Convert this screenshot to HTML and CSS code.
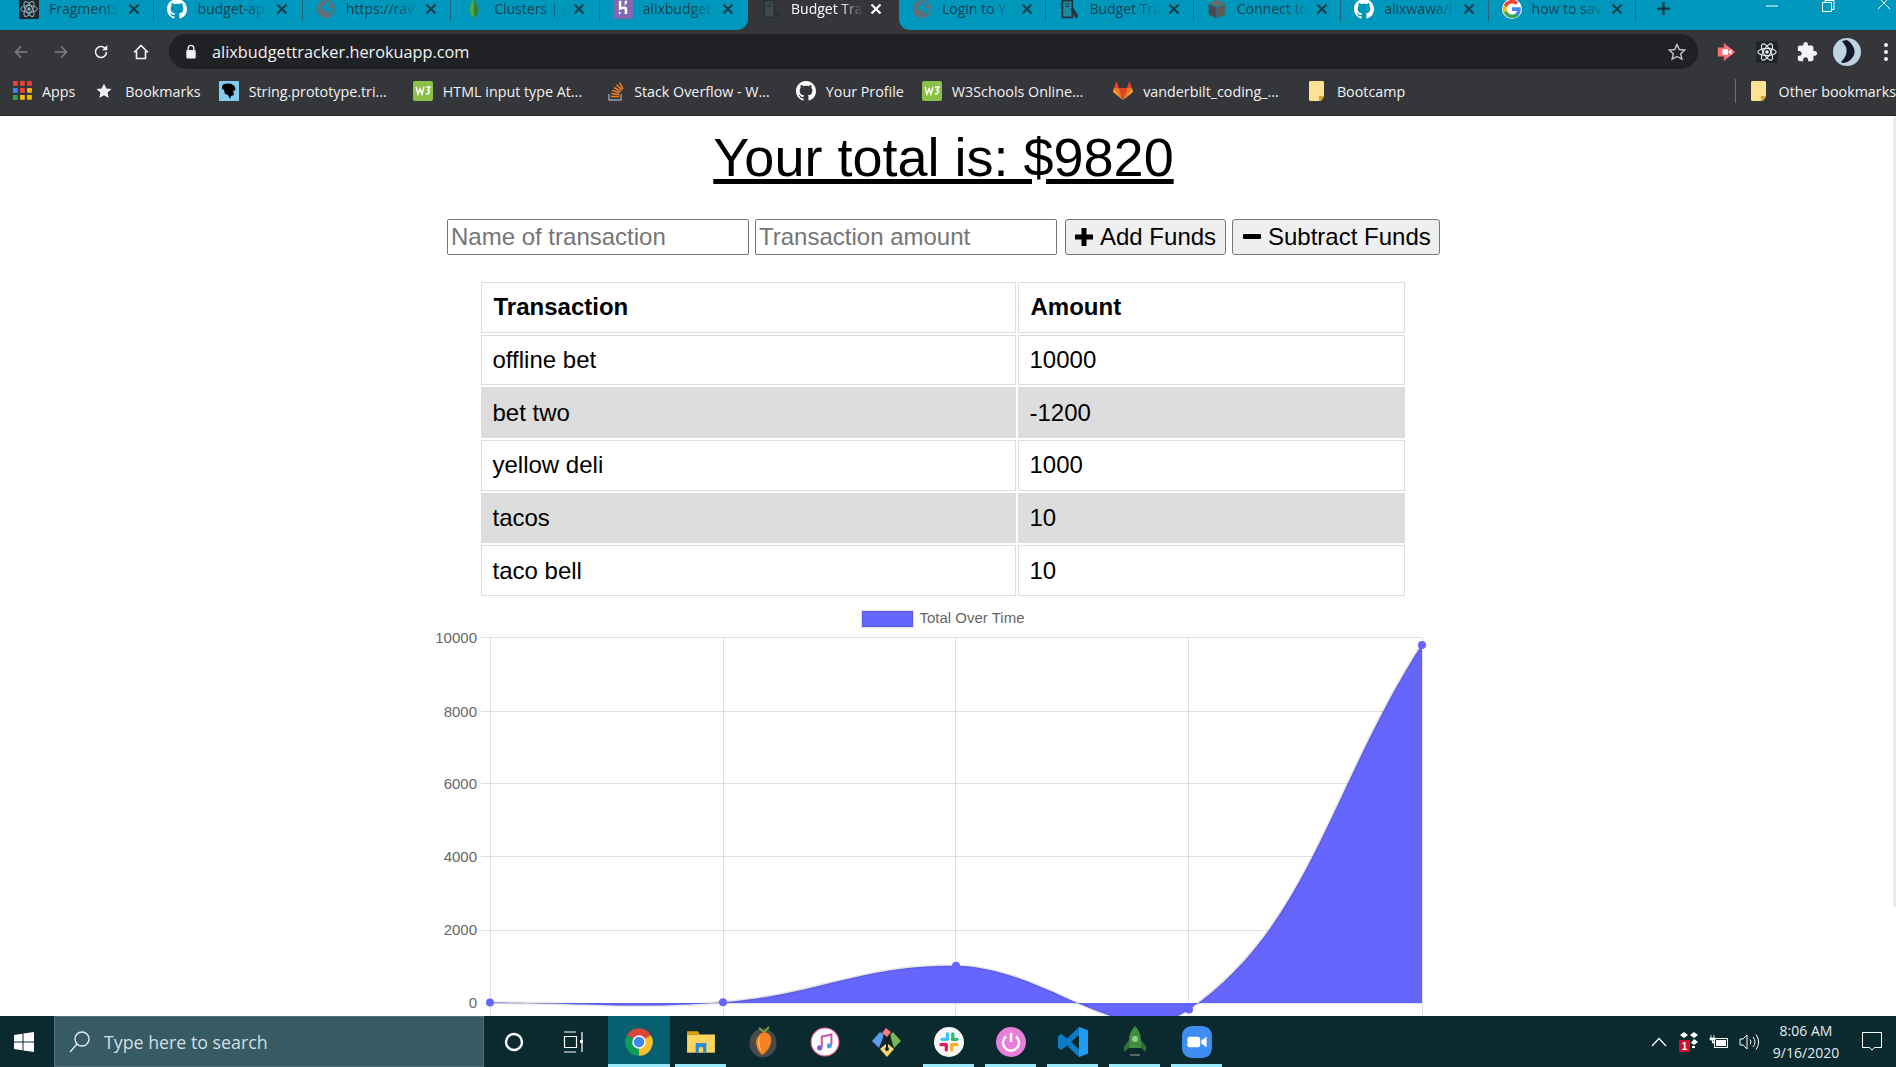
FILE: index.html
```html
<!DOCTYPE html>
<html>
  <head>
    <title>Budget Tracker</title>
    <link rel="stylesheet" href="styles.css">
  </head>
  <body>
    <!-- shared icons -->
    <svg class="defs" width="0" height="0">
      <symbol id="i-react" viewBox="0 0 24 24">
        <rect width="24" height="24" rx="2" fill="#20262b"/>
        <g fill="none" stroke="currentColor" stroke-width="1.2">
          <ellipse cx="12" cy="12" rx="10" ry="4"/>
          <ellipse cx="12" cy="12" rx="10" ry="4" transform="rotate(60 12 12)"/>
          <ellipse cx="12" cy="12" rx="10" ry="4" transform="rotate(120 12 12)"/>
        </g>
        <circle cx="12" cy="12" r="2" fill="currentColor"/>
      </symbol>
      <symbol id="i-github" viewBox="0 0 16 16">
        <path fill="#fff" fill-rule="evenodd" d="M8 0C3.58 0 0 3.58 0 8c0 3.54 2.29 6.53 5.47 7.59.4.07.55-.17.55-.38 0-.19-.01-.82-.01-1.49-2.01.37-2.53-.49-2.69-.94-.09-.23-.48-.94-.82-1.13-.28-.15-.68-.52-.01-.53.63-.01 1.08.58 1.23.82.72 1.21 1.87.87 2.33.66.07-.52.28-.87.51-1.07-1.78-.2-3.64-.89-3.64-3.95 0-.87.31-1.59.82-2.15-.08-.2-.36-1.02.08-2.12 0 0 .67-.21 2.2.82.64-.18 1.32-.27 2-.27.68 0 1.36.09 2 .27 1.53-1.04 2.2-.82 2.2-.82.44 1.1.16 1.92.08 2.12.51.56.82 1.27.82 2.15 0 3.07-1.87 3.75-3.65 3.95.29.25.54.73.54 1.48 0 1.07-.01 1.93-.01 2.2 0 .21.15.46.55.38A8.013 8.013 0 0016 8c0-4.42-3.58-8-8-8z"/>
      </symbol>
      <symbol id="i-globe" viewBox="0 0 24 24">
        <path fill="#5f6f78" fill-rule="evenodd" d="M12 1a11 11 0 1 0 0 22 11 11 0 0 0 0-22zM9 3.500l3 1 4-1.500 2 2.500-3 3 1 2 4 .5.500 3-3 4-2 .5v-3l-3-2-4-.5-2-3 1.500-2 2 .5 1-2z"/>
      </symbol>
      <symbol id="i-leaf" viewBox="0 0 24 24">
        <path fill="#4da84a" d="M12 0C8 5 6.500 9 6.500 13c0 4.500 3 7.500 4.500 8.500l.500 2.500h1l.500-2.500c1.500-1 4.500-4 4.500-8.500C17.500 9 16 5 12 0z"/>
        <path fill="#2f7f3a" d="M12 0v24h.500l.500-2.500c1.500-1 4.500-4 4.500-8.500C17.500 9 16 5 12 0z"/>
      </symbol>
      <symbol id="i-heroku" viewBox="0 0 24 24">
        <rect width="24" height="24" rx="3" fill="#8268b4"/>
        <path fill="#fff" d="M7 2h3v8c2-1 7-2 7 2v6h-3v-5c0-2-3-1-7 .5zM14 2h3c0 3-1 4.500-3 5.500zM7 15l3 1.500L7 19z"/>
      </symbol>
      <symbol id="i-notebook" viewBox="0 0 24 24">
        <path fill="#5d7078" fill-opacity=".35" stroke="#26323a" stroke-width="2" d="M4 2h12v20H4z"/>
        <path stroke="#26323a" stroke-width="1.400" d="M7 6h6M7 9h6M2 6h3M2 11h3M2 16h3"/>
        <path fill="#26323a" d="M14 11l3-1 6 10-1 3-3-1z"/>
      </symbol>
      <symbol id="i-box" viewBox="0 0 24 24">
        <path fill="#6a6a6a" d="M12 1l10 4-10 4L2 5z"/>
        <path fill="#4a4a4a" d="M2 6l9.500 4v13L2 19z"/>
        <path fill="#5a5a5a" d="M22 6l-9.500 4v13L22 19z"/>
      </symbol>
      <symbol id="i-google" viewBox="0 0 24 24">
        <circle cx="12" cy="12" r="12" fill="#fff"/>
        <path fill="#4285F4" d="M22.560 12.250c0-.78-.07-1.530-.2-2.250H12v4.260h5.920c-.26 1.370-1.040 2.530-2.210 3.310v2.770h3.570c2.080-1.920 3.280-4.740 3.280-8.090z"/>
        <path fill="#34A853" d="M12 23c2.970 0 5.460-.98 7.280-2.660l-3.570-2.770c-.98.66-2.230 1.060-3.710 1.060-2.860 0-5.290-1.930-6.160-4.530H2.180v2.840C3.990 20.530 7.700 23 12 23z"/>
        <path fill="#FBBC05" d="M5.840 14.090c-.22-.66-.35-1.360-.35-2.090s.13-1.430.35-2.090V7.070H2.180C1.430 8.550 1 10.220 1 12s.43 3.450 1.180 4.930l2.850-2.220.81-.62z"/>
        <path fill="#EA4335" d="M12 5.380c1.620 0 3.060.56 4.210 1.640l3.150-3.150C17.450 2.090 14.970 1 12 1 7.700 1 3.990 3.470 2.180 7.070l3.660 2.840c.87-2.600 3.300-4.530 6.160-4.530z"/>
      </symbol>
      <symbol id="i-close" viewBox="0 0 12 12">
        <path d="M1.500 1.500l9 9M10.500 1.500l-9 9" fill="none" stroke="currentColor" stroke-width="2.200"/>
      </symbol>
      <symbol id="i-w3" viewBox="0 0 20 20">
        <rect width="20" height="20" rx="2" fill="#8ac249"/>
        <path d="M3 6l2 7 2-5 2 5 2-7M13 6h4l-2 3c2 0 2 4-2 4" fill="none" stroke="#fff" stroke-width="1.400"/>
      </symbol>
      <symbol id="i-folder" viewBox="0 0 16 20">
        <path fill="#fde293" d="M1 0h13l1 1v14l-4 5H1l-1-1V1z"/>
        <path fill="#d9a92f" d="M15 14v2l-3 4h-2v-5h4z"/>
      </symbol>
    </svg>

    <!-- tab strip -->
    <div class="tabs">
      <div class="tab-group tab-group-left">
        <div class="tab"><svg class="favicon favicon-react"><use href="#i-react"/></svg><span class="tab-title">Fragments</span><svg class="tab-close"><use href="#i-close"/></svg></div>
        <div class="tab"><svg class="favicon"><use href="#i-github"/></svg><span class="tab-title">budget-ap</span><svg class="tab-close"><use href="#i-close"/></svg></div>
        <div class="tab"><svg class="favicon"><use href="#i-globe"/></svg><span class="tab-title">https://rav</span><svg class="tab-close"><use href="#i-close"/></svg></div>
        <div class="tab"><svg class="favicon"><use href="#i-leaf"/></svg><span class="tab-title">Clusters | A</span><svg class="tab-close"><use href="#i-close"/></svg></div>
        <div class="tab tab-last"><svg class="favicon"><use href="#i-heroku"/></svg><span class="tab-title">alixbudget</span><svg class="tab-close"><use href="#i-close"/></svg></div>
      </div>
      <div class="tab tab-active"><svg class="favicon"><use href="#i-notebook"/></svg><span class="tab-title">Budget Tra</span><svg class="tab-close"><use href="#i-close"/></svg></div>
      <div class="tab-group tab-group-right">
        <div class="tab"><svg class="favicon"><use href="#i-globe"/></svg><span class="tab-title">Login to Y</span><svg class="tab-close"><use href="#i-close"/></svg></div>
        <div class="tab"><svg class="favicon"><use href="#i-notebook"/></svg><span class="tab-title">Budget Tra</span><svg class="tab-close"><use href="#i-close"/></svg></div>
        <div class="tab"><svg class="favicon"><use href="#i-box"/></svg><span class="tab-title">Connect to</span><svg class="tab-close"><use href="#i-close"/></svg></div>
        <div class="tab"><svg class="favicon"><use href="#i-github"/></svg><span class="tab-title">alixwawa/l</span><svg class="tab-close"><use href="#i-close"/></svg></div>
        <div class="tab"><svg class="favicon"><use href="#i-google"/></svg><span class="tab-title">how to sav</span><svg class="tab-close"><use href="#i-close"/></svg></div>
        <svg class="new-tab" viewBox="0 0 16 16"><path d="M8 1v14M1 8h14" stroke="#17343f" stroke-width="2.400"/></svg>
        <div class="window-controls">
          <svg viewBox="0 0 14 14"><path d="M1 6h12" stroke="#fff" stroke-width="1"/></svg>
          <svg viewBox="0 0 14 14"><path d="M1.500 2.500h9v9h-9zM4 2V.5h9v9h-2" fill="none" stroke="#fff"/></svg>
          <svg viewBox="0 0 14 14"><path d="M1-3l12 12M13-3L1 9" stroke="#fff" stroke-width="1"/></svg>
        </div>
      </div>
    </div>

    <!-- address bar -->
    <div class="toolbar">
      <svg class="tool" viewBox="0 0 16 16"><path d="M14.500 8H2.500M8 2.500L2.500 8 8 13.500" fill="none" stroke="#7d8084" stroke-width="1.600"/></svg>
      <svg class="tool" viewBox="0 0 16 16"><path d="M1.500 8h12M8 2.500L13.500 8 8 13.500" fill="none" stroke="#7d8084" stroke-width="1.600"/></svg>
      <svg class="tool" viewBox="0 0 16 16"><path d="M13.500 8a5.500 5.500 0 1 1-1.600-3.900" fill="none" stroke="#f1f3f4" stroke-width="1.600"/><path d="M14.300 1v5.300H9z" fill="#f1f3f4"/></svg>
      <svg class="tool" viewBox="0 0 16 16"><path d="M1 8.500L8 1.500l7 7M3.500 7v7.500h9V7" fill="none" stroke="#f1f3f4" stroke-width="1.600"/></svg>
      <div class="omnibox">
        <svg class="lock" viewBox="0 0 12 16"><path d="M3 7V4.500a3 3 0 0 1 6 0V7" fill="none" stroke="#f1f3f4" stroke-width="1.500"/><rect x="1" y="6.500" width="10" height="9" rx="1.200" fill="#f1f3f4"/></svg>
        <span class="url">alixbudgettracker.herokuapp.com</span>
        <svg class="star" viewBox="0 0 20 20"><path d="M10 2.500l2.300 5 5.500.6-4.100 3.700 1.200 5.400L10 14.500l-4.900 2.700 1.200-5.400-4.100-3.700 5.500-.6z" fill="none" stroke="#c4c7c5" stroke-width="1.400"/></svg>
      </div>
      <div class="extensions">
        <svg class="tool" viewBox="0 0 24 24"><path d="M2 7h7l-1-5 13 10L8 22l1-5H2z" fill="#ff7076"/><path d="M7 9h6v6H7zM13 12l4-3v6z" fill="#fff"/></svg>
        <svg class="tool ext-react" viewBox="0 0 24 24"><use href="#i-react"/></svg>
        <svg class="tool" viewBox="0 0 24 24"><path fill="#f1f3f4" d="M20.500 11H19V7c0-1.100-.9-2-2-2h-4V3.500C13 2.120 11.880 1 10.500 1S8 2.120 8 3.500V5H4c-1.100 0-1.990.9-1.990 2v3.800H3.500c1.490 0 2.700 1.210 2.700 2.700s-1.210 2.700-2.700 2.700H2V20c0 1.100.9 2 2 2h3.800v-1.500c0-1.490 1.210-2.700 2.700-2.700 1.490 0 2.700 1.210 2.700 2.700V22H17c1.100 0 2-.9 2-2v-4h1.500c1.380 0 2.500-1.120 2.500-2.500S21.880 11 20.500 11z"/></svg>
        <svg class="tool avatar" viewBox="0 0 28 28"><circle cx="14" cy="14" r="14" fill="#bdd3e2"/><path d="M9 3l5-1c6 4 9 10 7 15-2 4-6 8-11 8l-2-1c4-4 7-9 5-15z" fill="#141a2b"/></svg>
        <svg class="dots" viewBox="0 0 6 20"><circle cx="3" cy="3" r="2" fill="#f1f3f4"/><circle cx="3" cy="10" r="2" fill="#f1f3f4"/><circle cx="3" cy="17" r="2" fill="#f1f3f4"/></svg>
      </div>
    </div>

    <!-- bookmarks -->
    <div class="bookmarks">
      <div class="bookmark">
        <svg class="bm-icon bm-apps" viewBox="0 0 17 17">
          <path fill="#ea4335" d="M0 0h4v4H0zM6 0h4v4H6zM12 0h4v4h-4z"/>
          <path fill="#4285f4" d="M0 6h4v4H0z"/><path fill="#ea4335" d="M6 6h4v4H6z"/><path fill="#fbbc05" d="M12 6h4v4h-4z"/>
          <path fill="#34a853" d="M0 12h4v4H0z"/><path fill="#fbbc05" d="M6 12h4v4H6zM12 12h4v4h-4z"/>
        </svg>Apps</div>
      <div class="bookmark bookmark-tight">
        <svg class="bm-icon bm-star" viewBox="0 0 16 16"><path fill="#f1f3f4" d="M8 .5l2.300 5 5.200.6-3.900 3.500 1.100 5.400L8 12.300 3.300 15l1.100-5.400L.5 6.100l5.200-.6z"/></svg>Bookmarks</div>
      <div class="bookmark bookmark-wide">
        <svg class="bm-icon" viewBox="0 0 20 20"><rect width="20" height="20" fill="#83cbf0"/><path d="M3 5c2-3 8-3 11-1 2 1 3 4 2 6l-2-1 1 5-3 1-1 3-2-4-3-1-1-4-2-1z" fill="#000"/></svg>String.prototype.tri...</div>
      <div class="bookmark bookmark-wide">
        <svg class="bm-icon"><use href="#i-w3"/></svg>HTML input type At...</div>
      <div class="bookmark bookmark-wide">
        <svg class="bm-icon bm-small" viewBox="0 0 16 20"><path d="M1 13v6h12v-6" fill="none" stroke="#9b9b9b" stroke-width="1.500"/><path d="M3 15.500h8M3.300 12.500l7.800 1M4.300 9.500l7.500 2.200M6 6.500l6.800 3.800M8.500 3.800l5.500 5.200M11.500 1.500l3.500 6.500" stroke="#f48024" stroke-width="1.500"/></svg>Stack Overflow - W...</div>
      <div class="bookmark bookmark-tight">
        <svg class="bm-icon"><use href="#i-github"/></svg>Your Profile</div>
      <div class="bookmark bookmark-wider">
        <svg class="bm-icon"><use href="#i-w3"/></svg>W3Schools Online...</div>
      <div class="bookmark bookmark-wider">
        <svg class="bm-icon" viewBox="0 0 20 20"><path fill="#e24329" d="M10 19l-4-12h8z"/><path fill="#fc6d26" d="M10 19L6 7H1zM10 19l4-12h5z"/><path fill="#fca326" d="M1 7l-1 4 10 8zM19 7l1 4-10 8z"/><path fill="#e24329" d="M1 7l2.500-7L6 7zM19 7l-2.500-7L14 7z"/></svg>vanderbilt_coding_...</div>
      <div class="bookmark">
        <svg class="bm-folder"><use href="#i-folder"/></svg>Bootcamp</div>
      <div class="bookmark bookmark-other">
        <svg class="bm-folder"><use href="#i-folder"/></svg>Other bookmarks</div>
    </div>

    <!-- the page itself -->
    <main class="viewport">
      <div class="page">
        <h1 class="total">Your total is: $9820</h1>

        <form class="entry">
          <input class="entry-input" type="text" placeholder="Name of transaction">
          <input class="entry-input" type="text" placeholder="Transaction amount">
          <button class="entry-button entry-add" type="button">
            <svg class="entry-icon" viewBox="0 0 18 18"><path d="M6.500 0h5v6.500H18v5h-6.500V18h-5v-6.500H0v-5h6.500z" fill="#000"/></svg>Add Funds</button>
          <button class="entry-button entry-sub" type="button">
            <svg class="entry-icon" viewBox="0 0 18 18"><rect y="6" width="18" height="5" rx="1" fill="#000"/></svg>Subtract Funds</button>
        </form>

        <table class="ledger">
          <thead>
            <tr><th class="col-name">Transaction</th><th>Amount</th></tr>
          </thead>
          <tbody>
            <tr><td>offline bet</td><td>10000</td></tr>
            <tr><td>bet two</td><td>-1200</td></tr>
            <tr><td>yellow deli</td><td>1000</td></tr>
            <tr><td>tacos</td><td>10</td></tr>
            <tr><td>taco bell</td><td>10</td></tr>
          </tbody>
        </table>

        <!-- chart, in page coordinates -->
        <svg class="chart" viewBox="430 600 1026 416" width="1026" height="416">
          <g class="grid">
            <path d="M481 637.500H1422M481 711.500H1422M481 783.500H1422M481 856.500H1422M481 930.500H1422M481 1003.500H1422"/>
            <path d="M490.500 637V1016M723.500 637V1016M955.500 637V1016M1188.500 637V1016M1422.500 637V1016"/>
          </g>
          <g class="ticks">
            <text x="477" y="643">10000</text>
            <text x="477" y="717">8000</text>
            <text x="477" y="789">6000</text>
            <text x="477" y="862">4000</text>
            <text x="477" y="935">2000</text>
            <text x="477" y="1008">0</text>
          </g>
          <rect class="legend-box" x="862" y="611" width="51" height="16"/>
          <text class="legend-text" x="919.500" y="623">Total Over Time</text>
          <path class="area" d="M490 1002.600C583.200 1002.500 630.400 1009.600 723 1002.300C816.800 994.900 863 964.200 956 965.700C1049.400 967.200 1123.100 1055.100 1189 1009.600C1309.500 926.400 1328.800 790.200 1422 644L1422 1003H490Z"/>
          <path class="line" d="M490 1002.600C583.200 1002.500 630.400 1009.600 723 1002.300C816.800 994.900 863 964.200 956 965.700C1049.400 967.200 1123.100 1055.100 1189 1009.600C1309.500 926.400 1328.800 790.200 1422 644"/>
          <g class="points">
            <circle cx="490" cy="1002.600" r="4"/>
            <circle cx="723" cy="1002.300" r="4"/>
            <circle cx="956" cy="965.700" r="4"/>
            <circle cx="1189" cy="1009.600" r="4"/>
            <circle cx="1422" cy="645" r="4"/>
          </g>
        </svg>
      </div>
      <div class="scroll-track"></div>
    </main>

    <!-- windows taskbar -->
    <footer class="taskbar">
      <div class="start">
        <svg width="20" height="20" viewBox="0 0 20 20"><path fill="#fff" d="M0 3l8.500-1.300v7.800H0zM9.500 1.500L20 0v9.500H9.500zM0 10.500h8.500v7.800L0 17zM9.500 10.500H20V20L9.500 18.500z"/></svg>
      </div>
      <div class="search">
        <svg class="search-icon" viewBox="0 0 22 24"><circle cx="13" cy="9" r="7" fill="none" stroke="#e4ecee" stroke-width="1.400"/><path d="M8 14L1 22" stroke="#e4ecee" stroke-width="1.400"/></svg>
        <span class="search-text">Type here to search</span>
      </div>
      <div class="tb-button">
        <svg width="20" height="20" viewBox="0 0 20 20"><circle cx="10" cy="10" r="8" fill="none" stroke="#fff" stroke-width="2.400"/></svg>
      </div>
      <div class="tb-button tb-taskview">
        <svg width="20" height="22" viewBox="0 0 20 22"><path d="M1 1h12M1 21h12M1.500 5.500h12v11h-12zM19 1v20" fill="none" stroke="#fff" stroke-width="1.200"/><rect x="17" y="9" width="3" height="3" fill="#fff"/></svg>
      </div>
      <div class="tb-app tb-app-active tb-open">
        <svg class="tb-icon" viewBox="0 0 24 24"><path fill="#db4437" d="M12 12L2.470 6.500A11 11 0 0 1 21.530 6.500z"/><path fill="#fbc02d" d="M12 12l9.530-5.500A11 11 0 0 1 12 23z"/><path fill="#0f9d58" d="M12 12v11A11 11 0 0 1 2.470 6.500z"/><circle cx="12" cy="12" r="5.400" fill="#fff"/><circle cx="12" cy="12" r="4.200" fill="#4285f4"/></svg>
      </div>
      <div class="tb-app tb-open">
        <svg class="tb-icon" viewBox="0 0 28 24"><path fill="#e0a000" d="M1 2h10l2 3H1z"/><path fill="#fcd462" d="M1 5h26v17H1z"/><path fill="#2a8ad4" d="M9 22v-9h10v9h-3v-5h-4v5z"/></svg>
      </div>
      <div class="tb-app">
        <svg class="tb-icon" viewBox="0 0 28 32"><ellipse cx="14" cy="17" rx="13.500" ry="14.500" fill="#4a4a4a"/><path fill="#f58220" d="M15 6c6 1 8 5 7 10-1 6-5 11-9 13-4-3-6-9-6-13 0-4 4-9 8-10z"/><path fill="#ffd38a" d="M11 10c-1 4-1 10 2 16-4-4-5-12-2-16z"/><path d="M15 6l5-5M15 6l-5-4" stroke="#7ea13b" stroke-width="1.800"/></svg>
      </div>
      <div class="tb-app">
        <svg class="tb-icon" viewBox="0 0 28 28"><circle cx="14" cy="14" r="13" fill="#fff" stroke="#f05a8c" stroke-width="1"/><path d="M11 19V9l9-2v10" fill="none" stroke="#d44fa5" stroke-width="1.800"/><circle cx="9" cy="19.500" r="2.400" fill="#7a5fe0"/><circle cx="18" cy="17.500" r="2.400" fill="#4aa3e8"/></svg>
      </div>
      <div class="tb-app">
        <svg class="tb-icon" viewBox="0 0 30 30"><path fill="#f27e7e" d="M10 6l4-5 5 4-4 5z"/><path fill="#76b852" d="M18 8l3-3 8 9-7 7z"/><path fill="#5d9cec" d="M12 8L8 5l-8 9 7 7z"/><path fill="#f5d76e" d="M8 22l7-6 7 6-7 8z"/><path d="M12 8l3 8 3-8M15 16v6" fill="none" stroke="#1b1b1b" stroke-width="2"/><circle cx="15" cy="22" r="2" fill="#1b1b1b"/></svg>
      </div>
      <div class="tb-app tb-open">
        <svg class="tb-icon" viewBox="0 0 28 28"><circle cx="14" cy="14" r="14" fill="#f7f7f7"/><rect x="11" y="5" width="3" height="8" rx="1.500" fill="#36c5f0"/><rect x="6" y="10" width="6" height="3" rx="1.500" fill="#36c5f0"/><rect x="16" y="5" width="3" height="8" rx="1.500" fill="#2eb67d"/><rect x="16" y="10" width="7" height="3" rx="1.500" fill="#2eb67d"/><rect x="15" y="15" width="8" height="3" rx="1.500" fill="#ecb22e"/><rect x="15" y="16" width="3" height="7" rx="1.500" fill="#ecb22e"/><rect x="5" y="15" width="8" height="3" rx="1.500" fill="#e01e5a"/><rect x="10" y="16" width="3" height="7" rx="1.500" fill="#e01e5a"/></svg>
      </div>
      <div class="tb-app tb-open">
        <svg class="tb-icon" viewBox="0 0 30 30"><circle cx="15" cy="15" r="15" fill="#e67fd9"/><path d="M15 6v9" stroke="#fff" stroke-width="2.400"/><path d="M10 9.500a8 8 0 1 0 10 0" fill="none" stroke="#fff" stroke-width="2.400"/></svg>
      </div>
      <div class="tb-app tb-open">
        <svg class="tb-icon" viewBox="0 0 30 30"><path fill="#0e7cc4" fill-rule="evenodd" d="M21 0L9 11.500 3.500 7 0 9v12l3.500 2L9 18.500 21 30l9-3.500v-23zM21 8l-8 7 8 7z"/><path fill="#1f9cf0" d="M21 0l9 3.500v23L21 30z"/></svg>
      </div>
      <div class="tb-app tb-open">
        <svg class="tb-icon" viewBox="0 0 28 32"><path fill="#3f8f3f" d="M14 0c4 4 6 9 6 14v8H8v-8c0-5 2-10 6-14z"/><path fill="#2f6f35" d="M8 14l-5 6v6l5-4zM20 14l5 6v6l-5-4z"/><circle cx="14" cy="13" r="3" fill="#8fcf8f"/><path d="M9 29h10" stroke="#777" stroke-width="1.600"/></svg>
      </div>
      <div class="tb-app tb-open">
        <svg class="tb-icon" viewBox="0 0 28 30"><rect width="28" height="30" rx="9" fill="#3e8df0"/><rect x="5" y="10" width="12" height="10" rx="2" fill="#fff"/><path d="M18 13.500l5-3.500v10l-5-3.500z" fill="#fff"/></svg>
      </div>
      <div class="tray">
        <div class="tray-item"><svg width="16" height="10" viewBox="0 0 16 10"><path d="M1 9l7-7.500L15 9" fill="none" stroke="#fff" stroke-width="1.200"/></svg></div>
        <div class="tray-item"><svg width="20" height="20" viewBox="0 0 20 20"><path d="M5 0l4 3-4 3-4-3zM15 0l4 3-4 3-4-3zM15 7l4 3-4 3-3-2zM13 14h3v2h-3z" fill="#fff"/><rect y="8" width="11" height="12" rx="1" fill="#d20f2a"/><text class="tray-badge" x="5.500" y="18">1</text></svg></div>
        <div class="tray-item"><svg width="20" height="14" viewBox="0 0 20 14"><path d="M2 0v3M5 0v3M1 3h5v2H1zM3.500 5v3H6" fill="#fff" stroke="#fff" stroke-width=".8"/><rect x="5.500" y="3.500" width="13" height="9" fill="none" stroke="#fff"/><rect x="7" y="5" width="10" height="6" fill="#fff"/></svg></div>
        <div class="tray-item"><svg width="21" height="18" viewBox="0 0 21 18"><path d="M1 6h3l4-4v14l-4-4H1z" fill="none" stroke="#fff"/><path d="M11 6.500a4 4 0 0 1 0 5M14 4a8 8 0 0 1 0 10M17 1.500a12 12 0 0 1 0 15" fill="none" stroke="#fff"/></svg></div>
        <div class="clock">
          <span>8:06 AM</span>
          <span>9/16/2020</span>
        </div>
        <div class="notify"><svg width="20" height="19" viewBox="0 0 20 19"><path d="M.5.500h19v15H12.500L10 18l-2.500-2.500H.5z" fill="none" stroke="#fff"/></svg></div>
      </div>
    </footer>
  </body>
</html>
```

FILE: styles.css
```css
* {
  box-sizing: border-box;
}

html,
body {
  height: 100%;
}

body {
  margin: 0;
  display: flex;
  flex-direction: column;
  overflow: hidden;
  background-color: #fff;
  font-family: "Liberation Sans", Arial, sans-serif;
}

.defs {
  position: absolute;
}

/* tab strip */
.tabs {
  display: flex;
  flex: 0 0 30px;
  background-color: #35363a;
  font-family: "Open Sans", sans-serif;
  font-size: 14px;
  overflow: hidden;
}

.tab-group {
  display: flex;
  background-color: #0097bc;
  height: 30px;
}

.tab-group-left {
  width: 748px;
  padding-left: 6px;
  border-bottom-right-radius: 11px;
}

.tab-group-right {
  flex: 1;
  padding-left: 0;
  border-bottom-left-radius: 11px;
}

.tab {
  display: flex;
  flex: 0 0 148.4px;
  height: 21px;
  padding: 0 0 4px 13px;
  align-items: center;
  color: #17404f;
  border-right: 1px solid #2a6577;
}

.tab-group-right .tab {
  flex-basis: 147.4px;
}

.tab-last {
  border-right: none;
}

.tab-active {
  flex: 0 0 151px;
  color: #fff;
  border-right: none;
}

.favicon {
  flex: none;
  width: 20px;
  height: 20px;
  margin-right: 10px;
}

.favicon-react {
  color: #8fb4c4;
}

.tab-title {
  flex: none;
  width: 76px;
  overflow: hidden;
  white-space: nowrap;
  -webkit-mask-image: linear-gradient(90deg, #000 65%, transparent 95%);
  mask-image: linear-gradient(90deg, #000 65%, transparent 95%);
}

.tab-close {
  flex: none;
  width: 12px;
  height: 12px;
  margin-left: 3px;
}

.new-tab {
  width: 15px;
  height: 15px;
  margin: 1px 0 0 20px;
}

.window-controls {
  display: flex;
  margin-left: 94px;
  gap: 42px;
}

.window-controls svg {
  width: 14px;
  height: 14px;
}

/* address bar */
.toolbar {
  display: flex;
  flex: 0 0 40px;
  padding: 4px 0 1px 1px;
  align-items: center;
  background-color: #35363a;
}

.tool {
  flex: none;
  width: 16px;
  height: 16px;
  margin: 0 12px;
}

.omnibox {
  display: flex;
  flex: 1;
  height: 35px;
  margin-left: 8px;
  padding: 0 11px 0 16px;
  align-items: center;
  background-color: #202124;
  border-radius: 18px;
  color: #f1f3f4;
}

.lock {
  width: 12px;
  height: 15px;
  margin-right: 15px;
}

.url {
  flex: 1;
  font-family: "Open Sans", sans-serif;
  font-size: 16.3px;
}

.star {
  width: 20px;
  height: 20px;
}

.extensions {
  display: flex;
  flex: none;
  width: 198px;
  align-items: center;
  padding-left: 9px;
}

.extensions .tool {
  width: 22px;
  height: 22px;
  margin: 0 9px;
}

.extensions .ext-react {
  color: #e8eaed;
}

.extensions .avatar {
  width: 28px;
  height: 28px;
  margin: 0 6px;
}

.dots {
  width: 6px;
  height: 20px;
  margin-left: 16px;
}

/* bookmarks */
.bookmarks {
  display: flex;
  flex: 0 0 46px;
  padding: 0 0 3px 13px;
  gap: 21px;
  align-items: center;
  background-color: #35363a;
  border-bottom: 1px solid #232427;
  color: #f1f3f4;
  font-family: "Open Sans", sans-serif;
  font-size: 14.3px;
  white-space: nowrap;
}

.bookmark {
  display: flex;
  align-items: center;
}

.bookmark-tight {
  margin-right: -3px;
}

.bookmark-wide {
  margin-right: 5px;
}

.bookmark-wider {
  margin-right: 9px;
}

.bm-icon {
  flex: none;
  width: 20px;
  height: 20px;
  margin-right: 10px;
}

.bm-apps {
  margin-right: 9px;
}

.bm-star {
  width: 16px;
  height: 16px;
  margin-right: 13px;
}

.bm-small {
  width: 16px;
}

.bm-folder {
  flex: none;
  width: 16px;
  height: 20px;
  margin-right: 12px;
}

.bookmark-other {
  margin-left: auto;
  height: 24px;
  padding-left: 15px;
  border-left: 1px solid #6f7074;
}

/* page */
.viewport {
  display: flex;
  flex: 1;
  min-height: 0;
  overflow: hidden;
}

.page {
  display: flex;
  flex: 0 0 1887px;
  flex-direction: column;
  align-items: center;
}

.scroll-track {
  flex: none;
  width: 3px;
  height: 791px;
  margin-left: 6px;
  background-color: #ececec;
}

.total {
  margin: 10px 0 0;
  font-size: 54px;
  font-weight: normal;
  line-height: 62px;
  text-decoration: underline;
}

.entry {
  display: flex;
  margin-top: 31px;
  gap: 6px;
}

.entry-input {
  width: 302px;
  height: 36px;
  padding: 1px 3px;
  border: 1px solid #767676;
  border-radius: 2px;
  font-family: inherit;
  font-size: 24px;
}

.entry-input::placeholder {
  color: #757575;
}

.entry-button {
  display: flex;
  height: 36px;
  padding: 0 9px;
  align-items: center;
  background-color: #efefef;
  border: 1px solid #767676;
  border-radius: 3px;
  color: #000;
  font-family: inherit;
  font-size: 24px;
  white-space: nowrap;
}

.entry-add {
  width: 161px;
  margin-left: 2px;
}

.entry-sub {
  width: 208px;
  padding-left: 10px;
}

.entry-icon {
  flex: none;
  width: 18px;
  height: 18px;
  margin-right: 7px;
}

.ledger {
  width: 928px;
  margin: 25px 0 0 -2px;
  border-collapse: separate;
  border-spacing: 2px;
  font-size: 24px;
}

.ledger th,
.ledger td {
  height: 50.67px;
  padding: 0 11px;
  border: 1px solid #ddd;
  text-align: left;
}

.ledger th {
  padding-left: 12px;
}

.col-name {
  width: 535px;
}

.ledger tbody tr:nth-child(even) td {
  background-color: #ddd;
}

.chart {
  flex: none;
  margin: 2px 0 0 -2px;
  display: block;
}

.grid path {
  fill: none;
  stroke: rgba(0, 0, 0, 0.12);
  stroke-width: 1;
}

.ticks text {
  fill: #666;
  font-size: 15px;
  text-anchor: end;
}

.legend-box {
  fill: #6666ff;
  stroke: rgba(0, 0, 0, 0.1);
  stroke-width: 2.4;
}

.legend-text {
  fill: #666;
  font-size: 15px;
}

.area {
  fill: #6666ff;
}

.line {
  fill: none;
  stroke: rgba(0, 0, 0, 0.1);
  stroke-width: 3;
}

.points circle {
  fill: #6666ff;
}

/* taskbar */
.taskbar {
  display: flex;
  flex: 0 0 51px;
  align-items: stretch;
  background-color: #0b2a30;
  color: #e4ecee;
  font-family: "Open Sans", sans-serif;
}

.start {
  display: flex;
  flex: 0 0 54px;
  padding-right: 6px;
  align-items: center;
  justify-content: center;
}

.search {
  display: flex;
  flex: 0 0 430px;
  padding-left: 14px;
  align-items: center;
  background-color: #365b64;
  border: 1px solid #50717a;
}

.search-icon {
  width: 22px;
  height: 24px;
  margin-right: 13px;
}

.search-text {
  color: #d3dfe2;
  font-size: 17.8px;
}

.tb-button {
  display: flex;
  flex: 0 0 60px;
  align-items: center;
  justify-content: center;
}

.tb-taskview {
  flex-basis: 64px;
  padding-right: 6px;
}

.tb-app {
  display: flex;
  position: relative;
  flex: 0 0 62px;
  align-items: center;
  justify-content: center;
}

.tb-app-active {
  background-color: #06606f;
}

.tb-open::after {
  content: "";
  position: absolute;
  left: 5px;
  right: 6px;
  bottom: 0;
  height: 3px;
  background-color: #99e9fb;
}

.tb-app-active.tb-open::after {
  left: 0;
  right: 0;
}

.tb-icon {
  width: 30px;
  height: 32px;
}

.tray {
  display: flex;
  margin-left: auto;
}

.tray-item {
  display: flex;
  flex: 0 0 30px;
  align-items: center;
  justify-content: center;
}

.tray-badge {
  fill: #fff;
  font-family: "Liberation Sans", sans-serif;
  font-size: 10px;
  font-weight: bold;
  text-anchor: middle;
}

.clock {
  display: flex;
  flex: 0 0 84px;
  flex-direction: column;
  align-items: center;
  justify-content: center;
  gap: 2px;
  font-size: 14px;
  line-height: 20px;
}

.notify {
  display: flex;
  flex: 0 0 48px;
  align-items: center;
  justify-content: center;
}
```
